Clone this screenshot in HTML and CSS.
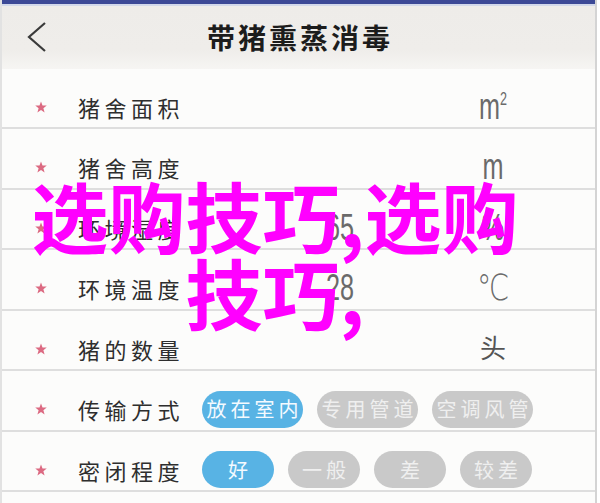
FILE: index.html
```html
<!DOCTYPE html>
<html lang="zh-CN">
<head>
<meta charset="utf-8">
<title>带猪熏蒸消毒</title>
<link rel="stylesheet" href="styles.css">
</head>
<body>
<div class="page">
  <div class="topbar"></div>
  <div class="topline"></div>
  <header class="header">
    <span class="back">
      <svg width="20" height="30" viewBox="0 0 20 30"><polyline points="18,1 2,15 18,29" fill="none" stroke="#3a3a3a" stroke-width="2.2" stroke-linejoin="miter"/></svg>
    </span>
    <h1 class="title">带猪熏蒸消毒</h1>
    <span></span>
  </header>
  <div class="list">
    <div class="row">
      <span class="star"><svg width="12" height="12" viewBox="0 0 24 24"><polygon points="12,1 15,9 23.5,9.2 16.8,14.5 19.2,23 12,18 4.8,23 7.2,14.5 0.5,9.2 9,9" fill="#dc6a82"/></svg></span>
      <span class="label">猪舍面积</span>
      <span class="num"></span>
      <span class="unit"><span class="sq">m<sup>2</sup></span></span>
    </div>
    <div class="row">
      <span class="star"><svg width="12" height="12" viewBox="0 0 24 24"><polygon points="12,1 15,9 23.5,9.2 16.8,14.5 19.2,23 12,18 4.8,23 7.2,14.5 0.5,9.2 9,9" fill="#dc6a82"/></svg></span>
      <span class="label">猪舍高度</span>
      <span class="num"></span>
      <span class="unit"><span class="sq">m</span></span>
    </div>
    <div class="row">
      <span class="star"><svg width="12" height="12" viewBox="0 0 24 24"><polygon points="12,1 15,9 23.5,9.2 16.8,14.5 19.2,23 12,18 4.8,23 7.2,14.5 0.5,9.2 9,9" fill="#dc6a82"/></svg></span>
      <span class="label">环境湿度</span>
      <span class="num"><span class="sq">65</span></span>
      <span class="unit"><span class="sq">%</span></span>
    </div>
    <div class="row">
      <span class="star"><svg width="12" height="12" viewBox="0 0 24 24"><polygon points="12,1 15,9 23.5,9.2 16.8,14.5 19.2,23 12,18 4.8,23 7.2,14.5 0.5,9.2 9,9" fill="#dc6a82"/></svg></span>
      <span class="label">环境温度</span>
      <span class="num"><span class="sq">28</span></span>
      <span class="unit"><span class="sq deg">℃</span></span>
    </div>
    <div class="row">
      <span class="star"><svg width="12" height="12" viewBox="0 0 24 24"><polygon points="12,1 15,9 23.5,9.2 16.8,14.5 19.2,23 12,18 4.8,23 7.2,14.5 0.5,9.2 9,9" fill="#dc6a82"/></svg></span>
      <span class="label">猪的数量</span>
      <span class="num"></span>
      <span class="unit"><span class="cjk-unit">头</span></span>
    </div>
    <div class="row">
      <span class="star"><svg width="12" height="12" viewBox="0 0 24 24"><polygon points="12,1 15,9 23.5,9.2 16.8,14.5 19.2,23 12,18 4.8,23 7.2,14.5 0.5,9.2 9,9" fill="#dc6a82"/></svg></span>
      <span class="label">传输方式</span>
      <div class="pills">
        <span class="pill on wide">放在室内</span>
        <span class="pill wide">专用管道</span>
        <span class="pill wide">空调风管</span>
      </div>
    </div>
    <div class="row">
      <span class="star"><svg width="12" height="12" viewBox="0 0 24 24"><polygon points="12,1 15,9 23.5,9.2 16.8,14.5 19.2,23 12,18 4.8,23 7.2,14.5 0.5,9.2 9,9" fill="#dc6a82"/></svg></span>
      <span class="label">密闭程度</span>
      <div class="pills">
        <span class="pill on">好</span>
        <span class="pill">一般</span>
        <span class="pill">差</span>
        <span class="pill">较差</span>
      </div>
    </div>
  </div>
  <div class="overlay">选购技巧,选购技巧,</div>
</div>
</body>
</html>
```
FILE: styles.css
```css
html, body {
  margin: 0;
  padding: 0;
  background: #ffffff;
}
body {
  width: 600px;
  height: 503px;
  overflow: hidden;
  font-family: "Noto Sans CJK SC", "Noto Sans", sans-serif;
}
.page {
  position: relative;
  width: 597px;
  height: 503px;
  border-right: 2px solid #d4d4d4;
  border-left: 2px solid #e2e2e2;
  box-sizing: border-box;
  background: #fcfcfb;
}
.topbar {
  height: 4px;
  background: #3c4996;
}
.topline {
  height: 2px;
  background: #d2d8ea;
}
.header {
  height: 62.5px;
  display: grid;
  grid-template-columns: 60px 1fr 60px;
  align-items: center;
  background: linear-gradient(#eeece9 0%, #efedea 70%, #f6f5f3 100%);
}
.back {
  display: flex;
  align-items: center;
  padding-left: 25px;
  height: 30px;
}
.title {
  margin: 0;
  text-align: center;
  font-size: 28px;
  font-weight: 700;
  letter-spacing: 3px;
  color: #1c1c1c;
  line-height: 1;
  padding-left: 3px;
}
.row {
  height: 60.5px;
  box-sizing: border-box;
  border-bottom: 2px solid #dedede;
  padding-top: 18px;
  display: flex;
  align-items: center;
}
.star {
  width: 12px;
  margin-left: 33px;
  margin-right: 31px;
  display: flex;
  align-items: center;
}
.label {
  width: 124px;
  font-size: 22px;
  letter-spacing: 4.5px;
  color: #2e2e2e;
  line-height: 1;
}
.num {
  margin-left: 124px;
  width: 142px;
  color: #6a6a6a;
}
.unit {
  width: 50px;
  text-align: center;
  color: #6a6a6a;
}
.sq {
  display: inline-block;
  font-family: "Liberation Sans", Arial, sans-serif;
  font-size: 36px;
  line-height: 1;
  transform: scaleX(0.7);
  transform-origin: left center;
}
.unit .sq {
  transform-origin: center center;
}
.sq sup {
  font-size: 18px;
  vertical-align: 14px;
  line-height: 0;
}
.sq.deg {
  font-family: "DejaVu Sans", sans-serif;
  font-size: 36px;
  font-weight: 300;
  transform: scaleX(0.8);
}
.cjk-unit {
  font-size: 26px;
  color: #555;
  line-height: 1;
}
.pills {
  display: flex;
  gap: 14px;
}
.pill {
  width: 72px;
  height: 37px;
  border-radius: 19px;
  background: #c9c9c9;
  color: #efefef;
  font-size: 20px;
  letter-spacing: 4px;
  text-indent: 4px;
  display: flex;
  align-items: center;
  justify-content: center;
  line-height: 1;
}
.pill.wide {
  width: 101px;
}
.pill.on {
  background: #58b3e4;
  color: #f4faff;
}
.overlay {
  position: absolute;
  left: 23px;
  top: 176px;
  width: 500px;
  text-align: center;
  font-size: 77px;
  line-height: 77px;
  font-weight: 700;
  color: #ff00ff;
}
```
